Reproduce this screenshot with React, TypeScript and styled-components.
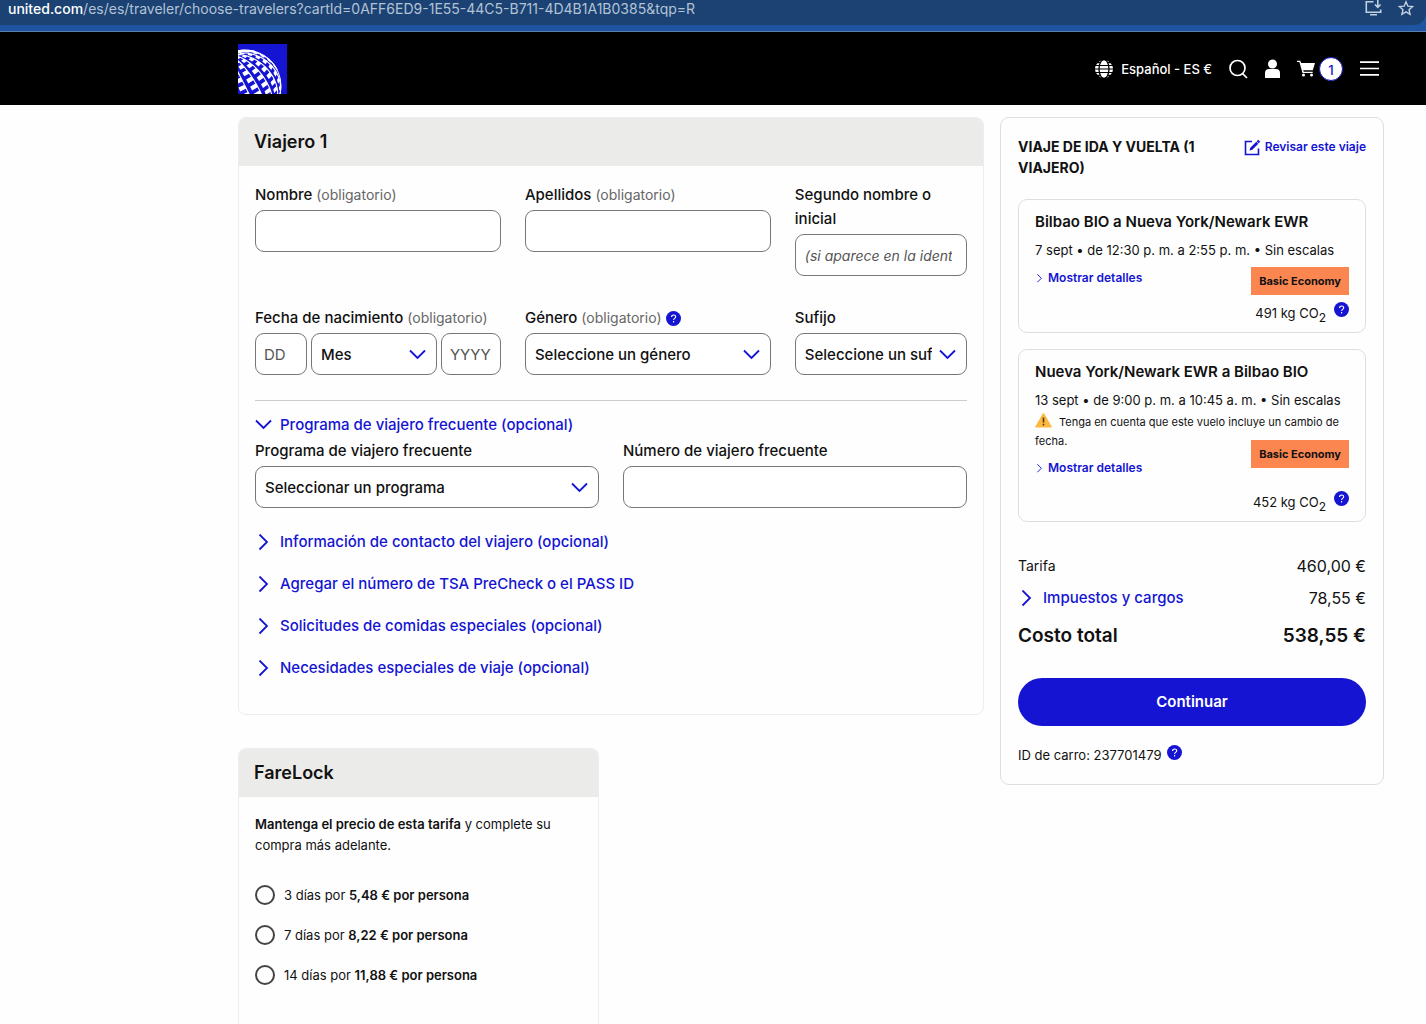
import React from 'react';
import styled, { createGlobalStyle } from 'styled-components';

const blue = '#1414d2';
const ink = '#111';
const line = '#dedede';

const GlobalStyle = createGlobalStyle`
  *, *::before, *::after { box-sizing: border-box; }
  body {
    margin: 0;
    background: #fefefe;
    color: ${ink};
    font-family: Inter, "Liberation Sans", sans-serif;
    font-size: 15px;
    line-height: 24px;
  }
  button, input, select { font: inherit; color: inherit; margin: 0; }
  h1, h2, h3, p { margin: 0; }
  svg { display: block; flex: none; }
`;

const Page = styled.div`
  min-height: 100vh;
  display: flex;
  flex-direction: column;
`;

const BrowserBar = styled.div`
  background: #1e54a0;
  border-bottom: 1px solid #5b7fae;
  padding-bottom: 6px;
`;

const AddressBar = styled.div`
  display: flex;
  align-items: flex-start;
  justify-content: space-between;
  height: 25px;
  padding: 0 12px 0 8px;
  background: #1b4273;
  border-bottom-right-radius: 12px;
  color: #b3c3d6;
  font-size: 14px;
  line-height: 17px;
  white-space: nowrap;
`;

const Domain = styled.span`
  color: #fff;
  font-weight: 500;
`;

const BarIcons = styled.div`
  display: flex;
  gap: 16px;
`;

const Header = styled.header`
  display: flex;
  align-items: center;
  justify-content: space-between;
  height: 73px;
  padding: 0 47px 0 238px;
  background: #000;
  color: #fff;
`;

const Nav = styled.nav`
  display: flex;
  align-items: center;
  gap: 17px;
`;

const NavButton = styled.button`
  display: flex;
  align-items: center;
  gap: 8px;
  padding: 0;
  border: 0;
  background: none;
  color: #fff;
  font-size: 13px;
  font-weight: 500;
  cursor: pointer;
`;

const CartCount = styled.span`
  display: grid;
  place-items: center;
  width: 24px;
  height: 24px;
  margin-left: -4px;
  border: 1px solid ${blue};
  border-radius: 50%;
  background: #fff;
  color: ${blue};
`;

const Content = styled.main`
  flex: 1;
  display: grid;
  grid-template-columns: minmax(0, 1fr) 384px;
  gap: 16px;
  padding: 12px 42px 0 238px;
`;

const Column = styled.div`
  display: flex;
  flex-direction: column;
  gap: 33px;
`;

const Panel = styled.section<{ $half?: boolean }>`
  border: 1px solid #ededed;
  border-radius: 8px;
  overflow: hidden;
  ${p => p.$half && `
    flex: 1;
    width: calc(50% - 12px);
    border-bottom: 0;
    border-bottom-left-radius: 0;
    border-bottom-right-radius: 0;
  `}
`;

const PanelTitle = styled.h2`
  padding: 10px 15px;
  background: #ebebea;
  font-size: 18px;
  font-weight: 600;
  line-height: 28px;
`;

const PanelBody = styled.div`
  padding: 17px 16px 25px;
`;

const NameGrid = styled.div`
  display: grid;
  grid-template-columns: 10fr 10fr 7fr;
  gap: 30px 24px;
  padding-bottom: 25px;
  border-bottom: 1px solid #ccc;
`;

const ProgramGrid = styled.div`
  display: grid;
  grid-template-columns: 1fr 1fr;
  gap: 24px;
  margin: 2px 0 13px;
`;

const Field = styled.div`
  display: flex;
  flex-direction: column;
  gap: 3px;
  min-width: 0;
`;

const LabelRow = styled.div`
  display: flex;
  align-items: center;
  gap: 4px;
`;

const Label = styled.label`
  font-weight: 500;
`;

const Required = styled.span`
  color: #666;
  font-size: 14px;
  font-weight: 400;
`;

const Input = styled.input<{ $width?: number }>`
  width: ${p => (p.$width ? `${p.$width}px` : '100%')};
  height: 42px;
  padding: 0 ${p => (p.$width ? 8 : 14)}px 0 ${p => (p.$width ? 8 : 9)}px;
  border: 1px solid #777;
  border-radius: 9px;
  background: #fff;
  &::placeholder {
    color: #555;
    opacity: 1;
    ${p => !p.$width && 'font-style: italic; font-size: 14px;'}
  }
`;

const SelectBox = styled.div`
  position: relative;
  flex: 1;
  min-width: 0;
  svg {
    position: absolute;
    right: 11px;
    top: 16px;
    color: ${blue};
    pointer-events: none;
  }
`;

const Select = styled.select`
  display: block;
  appearance: none;
  width: 100%;
  height: 42px;
  padding: 2px 34px 0 9px;
  border: 1px solid #777;
  border-radius: 9px;
  background: #fff;
  font-weight: 500;
  overflow: hidden;
  text-overflow: clip;
`;

const DateRow = styled.div`
  display: flex;
  gap: 4px;
`;

const Toggle = styled.button<{ $tall?: boolean }>`
  display: flex;
  align-items: center;
  gap: 8px;
  width: 100%;
  height: ${p => (p.$tall ? 42 : 24)}px;
  padding: 0;
  border: 0;
  background: none;
  color: ${blue};
  font-size: 15px;
  font-weight: 500;
  text-align: left;
  cursor: pointer;
`;

const OpenSection = styled.div`
  padding-top: 12px;
`;

const HelpButton = styled.button`
  display: block;
  padding: 0;
  border: 0;
  background: none;
  cursor: pointer;
`;

const LockText = styled.p`
  margin-bottom: 19px;
  font-size: 13px;
  line-height: 21px;
  strong { font-weight: 600; }
`;

const RadioRow = styled.label`
  display: flex;
  align-items: center;
  gap: 9px;
  height: 40px;
  font-size: 13px;
  strong { font-weight: 600; }
`;

const Radio = styled.input`
  appearance: none;
  width: 20px;
  height: 20px;
  border: 2px solid #444;
  border-radius: 50%;
  background: #fff;
  &:checked { border: 6px solid ${blue}; }
`;

const Summary = styled.aside`
  align-self: start;
  padding: 18px 17px;
  border: 1px solid ${line};
  border-radius: 9px;
`;

const SummaryHead = styled.div`
  display: flex;
  align-items: flex-start;
  justify-content: space-between;
  gap: 16px;
  margin-bottom: 21px;
`;

const SummaryTitle = styled.h2`
  font-size: 14px;
  font-weight: 700;
  line-height: 21px;
`;

const SmallLink = styled.a`
  display: flex;
  align-items: center;
  gap: 4px;
  color: ${blue};
  font-size: 12px;
  font-weight: 600;
  line-height: 22px;
  text-decoration: none;
  white-space: nowrap;
`;

const Flight = styled.article`
  margin-bottom: 16px;
  padding: 11px 16px 8px;
  border: 1px solid ${line};
  border-radius: 9px;
`;

const FlightTitle = styled.h3`
  margin-bottom: 6px;
  font-size: 15px;
  font-weight: 600;
  line-height: 22px;
`;

const FlightTime = styled.p`
  font-size: 13px;
  line-height: 22px;
`;

const Notice = styled.p`
  margin-top: 2px;
  font-size: 11px;
  line-height: 19px;
  svg { display: inline-block; margin-right: 7px; vertical-align: -2px; }
`;

const FlightFoot = styled.div`
  display: flex;
  align-items: flex-start;
  justify-content: space-between;
  margin-top: 6px;
`;

const Fare = styled.div<{ $spread?: boolean }>`
  display: flex;
  flex-direction: column;
  align-items: flex-end;
  gap: ${p => (p.$spread ? 23 : 7)}px;
  margin-top: ${p => (p.$spread ? -17 : 0)}px;
`;

const FareBadge = styled.span`
  padding: 4px 8px;
  background: #fb8650;
  font-size: 11px;
  font-weight: 700;
  line-height: 20px;
`;

const Carbon = styled.div`
  display: flex;
  align-items: flex-start;
  gap: 8px;
  font-size: 13px;
  line-height: 22px;
  sub { font-size: 12px; line-height: 0; }
`;

const Prices = styled.dl`
  display: flex;
  flex-direction: column;
  gap: 8px;
  margin: 32px 0 28px;
`;

const PriceRow = styled.div<{ $total?: boolean }>`
  display: flex;
  justify-content: space-between;
  font-size: 16px;
  ${p => p.$total && 'margin-top: 4px; font-size: 19px; font-weight: 600; line-height: 28px;'}
  dt { font-size: ${p => (p.$total ? 19 : 14)}px; }
  dd, dt { margin: 0; }
`;

const Continue = styled.button`
  width: 100%;
  height: 48px;
  border: 0;
  border-radius: 24px;
  background: ${blue};
  color: #fff;
  font-weight: 600;
  cursor: pointer;
`;

const CartId = styled.div`
  display: flex;
  align-items: flex-start;
  gap: 6px;
  margin-top: 19px;
  font-size: 13px;
  line-height: 21px;
`;

function Chevron({ down, small }: { down?: boolean; small?: boolean }) {
  const size = small ? 9 : 17;
  return (
    <svg width={size} height={down ? 12 : size} viewBox={down ? '0 0 17 12' : '0 0 17 17'} fill="none" stroke="currentColor" strokeWidth="1.800">
      <path d={down ? 'M1 1.500l7.500 7.500L16 1.500' : 'M4.500 .5L12 8 4.500 15.500'} />
    </svg>
  );
}

function Help({ label }: { label: string }) {
  return (
    <HelpButton type="button" aria-label={label}>
      <svg width="15" height="15" viewBox="0 0 15 15" fill="none">
        <circle cx="7.5" cy="7.5" r="7.500" fill={blue} />
        <path d="M5.500 6c0-2.700 4.200-2.700 4.200-.2 0 1.600-2.100 1.500-2.100 3.100M7.600 10v1.400" stroke="#fff" strokeWidth="1.100" />
      </svg>
    </HelpButton>
  );
}

/* Globe mark: the visible side of a tilted sphere, with a block on every other step of each band. */
const globe = (() => {
  const norm = (v: number[]) => {
    const l = Math.hypot(...v);
    return v.map(n => n / l);
  };
  const cross = (a: number[], b: number[]) => [
    a[1] * b[2] - a[2] * b[1],
    a[2] * b[0] - a[0] * b[2],
    a[0] * b[1] - a[1] * b[0],
  ];
  const pole = norm([-0.42, -0.84, 0.3]);
  const east = norm(cross(pole, [0, 0, 1]));
  const south = cross(pole, east);
  const at = (lat: number, lon: number) => {
    const a = (lat * Math.PI) / 180;
    const b = (lon * Math.PI) / 180;
    const p = [0, 1, 2].map(i => Math.cos(a) * pole[i] + Math.sin(a) * (Math.cos(b) * east[i] + Math.sin(b) * south[i]));
    return { x: 7 + 36 * p[0], y: 42 + 36 * p[1], front: p[2] > -0.02 };
  };
  const path = (pts: { x: number; y: number; front: boolean }[], close: boolean) => {
    const seen = pts.filter(p => p.front);
    if (seen.length < 2 || (close && seen.length < pts.length)) return '';
    return 'M' + seen.map(p => `${p.x.toFixed(1)} ${p.y.toFixed(1)}`).join('L') + (close ? 'Z' : '');
  };
  let cells = '';
  let lines = '';
  for (let band = 0; band < 20; band += 1) {
    const lon = band * 18;
    const pts = [];
    for (let lat = 6; lat < 150; lat += 4) pts.push(at(lat, lon));
    lines += path(pts, false);
    for (let lat = 12 + (band % 2) * 6; lat < 130; lat += 13) {
      cells += path([at(lat, lon), at(lat, lon + 11), at(lat + 7, lon + 11), at(lat + 7, lon)], true);
    }
  }
  return { cells, lines };
})();

function Logo() {
  return (
    <svg width="49" height="50" viewBox="0 0 49 50" role="img" aria-label="United">
      <rect width="49" height="50" fill={blue} />
      <path d={globe.cells} fill="#fff" />
      <path d={globe.lines} fill="none" stroke="#fff" strokeWidth="1.100" />
      <circle cx="7" cy="42" r="36" fill="none" stroke="#fff" strokeWidth="1" />
    </svg>
  );
}

function EditIcon() {
  return (
    <svg width="17" height="17" viewBox="0 0 17 17" fill="none" stroke={blue} strokeWidth="1.600">
      <path d="M8 2.500H1.500v13h13V9.500" />
      <path d="M5.500 11.500l.8-2.800 6-6 2 2-6 6z" fill={blue} stroke="none" />
      <path d="M13.700 3.300l1.500-1.500" strokeWidth="2.800" />
    </svg>
  );
}

function Warning() {
  return (
    <svg width="17" height="15" viewBox="0 0 17 15" role="img" aria-label="Aviso">
      <path d="M8.500 1L16 13.800H1z" fill="#fdb93f" stroke="#fdb93f" strokeWidth="1.600" strokeLinejoin="round" />
      <path d="M8.500 4.500v5M8.500 10.800v1.700" stroke="#4a3a1a" strokeWidth="1.600" />
    </svg>
  );
}

const sections = [
  'Información de contacto del viajero (opcional)',
  'Agregar el número de TSA PreCheck o el PASS ID',
  'Solicitudes de comidas especiales (opcional)',
  'Necesidades especiales de viaje (opcional)',
];

const lockOptions = [
  { days: '3 días', price: '5,48 €' },
  { days: '7 días', price: '8,22 €' },
  { days: '14 días', price: '11,88 €' },
];

const flights = [
  { route: 'Bilbao BIO a Nueva York/Newark EWR', time: '7 sept • de 12:30 p. m. a 2:55 p. m. • Sin escalas', carbon: '491 kg CO', notice: '' },
  {
    route: 'Nueva York/Newark EWR a Bilbao BIO',
    time: '13 sept • de 9:00 p. m. a 10:45 a. m. • Sin escalas',
    carbon: '452 kg CO',
    notice: 'Tenga en cuenta que este vuelo incluye un cambio de fecha.',
  },
];

function Dropdown({ id, value, label }: { id: string; value: string; label?: string }) {
  return (
    <SelectBox>
      <Select id={id} aria-label={label}>
        <option>{value}</option>
      </Select>
      <Chevron down />
    </SelectBox>
  );
}

export default function App() {
  return (
    <Page>
      <GlobalStyle />
      <BrowserBar>
        <AddressBar>
          <span>
            <Domain>united.com</Domain>/es/es/traveler/choose-travelers?cartId=0AFF6ED9-1E55-44C5-B711-4D4B1A1B0385&amp;tqp=R
          </span>
          <BarIcons>
            <svg width="17" height="17" viewBox="0 0 17 17" fill="none" stroke="#c3d0e0" strokeWidth="1.600">
              <path d="M8.500 1.800H1.300v10.400h14.400V9.500M5 14.700h7M12.800 0v7M10 4.500l2.800 2.800 2.800-2.800" />
            </svg>
            <svg width="16" height="17" viewBox="0 0 16 17" fill="none" stroke="#c3d0e0" strokeWidth="1.400">
              <path d="M8 1.800l1.900 4.400 4.700.4-3.600 3.100 1.100 4.700L8 11.900l-4.100 2.500L5 9.700 1.400 6.600l4.700-.4z" />
            </svg>
          </BarIcons>
        </AddressBar>
      </BrowserBar>

      <Header>
        <Logo />
        <Nav>
          <NavButton type="button">
            <svg width="18" height="20" viewBox="0 0 18 20" fill="none">
              <circle cx="9" cy="10" r="9" fill="#fff" />
              <path d="M0 6.500h18M0 10h18M0 13.500h18" stroke="#000" strokeWidth="1.100" />
              <path d="M2 3.700h3.500M12.500 3.700H16M2 16.300h3.500M12.500 16.300H16" stroke="#000" strokeWidth="1.300" />
              <ellipse cx="9" cy="10" rx="5" ry="9.500" stroke="#000" strokeWidth="1.300" />
            </svg>
            Español - ES €
          </NavButton>
          <NavButton type="button" aria-label="Buscar">
            <svg width="19" height="20" viewBox="0 0 19 20" fill="none" stroke="#fff" strokeWidth="1.700">
              <circle cx="8.500" cy="9" r="7.500" />
              <path d="M13.500 14.500l4.500 4.500" />
            </svg>
          </NavButton>
          <NavButton type="button" aria-label="Cuenta">
            <svg width="15" height="20" viewBox="0 0 15 20" fill="#fff">
              <circle cx="7.500" cy="5" r="4.500" />
              <path d="M0 19v-5c0-2.400 1.500-4 4-4h7c2.500 0 4 1.600 4 4v5z" />
            </svg>
          </NavButton>
          <NavButton type="button" aria-label="Carrito, 1 artículo">
            <svg width="18" height="17" viewBox="0 0 18 17" fill="#fff">
              <path d="M0 .7h3.300l.8 2.200H18l-2.200 7.400H6.300l.4 1.500h9v1.300H5.500L2.400 2.100H0z" />
              <circle cx="6.500" cy="15.100" r="1.500" />
              <circle cx="14.500" cy="15.100" r="1.500" />
            </svg>
            <CartCount>1</CartCount>
          </NavButton>
          <NavButton type="button" aria-label="Menú">
            <svg width="19" height="15" viewBox="0 0 19 15" stroke="#fff" strokeWidth="1.700">
              <path d="M0 1.200h19M0 7.500h19M0 13.800h19" />
            </svg>
          </NavButton>
        </Nav>
      </Header>

      <Content>
        <Column>
          <Panel>
            <PanelTitle>Viajero 1</PanelTitle>
            <PanelBody>
              <NameGrid>
                <Field>
                  <Label htmlFor="first">Nombre <Required>(obligatorio)</Required></Label>
                  <Input id="first" />
                </Field>
                <Field>
                  <Label htmlFor="last">Apellidos <Required>(obligatorio)</Required></Label>
                  <Input id="last" />
                </Field>
                <Field>
                  <Label htmlFor="middle">Segundo nombre o inicial</Label>
                  <Input id="middle" placeholder="(si aparece en la identificación)" />
                </Field>
                <Field>
                  <Label htmlFor="day">Fecha de nacimiento <Required>(obligatorio)</Required></Label>
                  <DateRow>
                    <Input id="day" $width={52} placeholder="DD" />
                    <Dropdown id="month" value="Mes" label="Mes" />
                    <Input $width={60} placeholder="YYYY" aria-label="Año" />
                  </DateRow>
                </Field>
                <Field>
                  <LabelRow>
                    <Label htmlFor="gender">Género <Required>(obligatorio)</Required></Label>
                    <Help label="Ayuda sobre el género" />
                  </LabelRow>
                  <Dropdown id="gender" value="Seleccione un género" />
                </Field>
                <Field>
                  <Label htmlFor="suffix">Sufijo</Label>
                  <Dropdown id="suffix" value="Seleccione un sufijo" />
                </Field>
              </NameGrid>

              <OpenSection>
                <Toggle type="button" aria-expanded="true">
                  <Chevron down />
                  Programa de viajero frecuente (opcional)
                </Toggle>
                <ProgramGrid>
                  <Field>
                    <Label htmlFor="program">Programa de viajero frecuente</Label>
                    <Dropdown id="program" value="Seleccionar un programa" />
                  </Field>
                  <Field>
                    <Label htmlFor="number">Número de viajero frecuente</Label>
                    <Input id="number" />
                  </Field>
                </ProgramGrid>
              </OpenSection>
              {sections.map(title => (
                <Toggle key={title} type="button" aria-expanded="false" $tall>
                  <Chevron />
                  {title}
                </Toggle>
              ))}
            </PanelBody>
          </Panel>

          <Panel $half>
            <PanelTitle>FareLock</PanelTitle>
            <PanelBody>
              <LockText>
                <strong>Mantenga el precio de esta tarifa</strong> y complete su compra más adelante.
              </LockText>
              {lockOptions.map(option => (
                <RadioRow key={option.days}>
                  <Radio type="radio" name="farelock" />
                  <span>{option.days} por <strong>{option.price} por persona</strong></span>
                </RadioRow>
              ))}
            </PanelBody>
          </Panel>
        </Column>

        <Summary>
          <SummaryHead>
            <SummaryTitle>VIAJE DE IDA Y VUELTA (1 VIAJERO)</SummaryTitle>
            <SmallLink href="#viaje"><EditIcon />Revisar este viaje</SmallLink>
          </SummaryHead>
          {flights.map(flight => (
            <Flight key={flight.route}>
              <FlightTitle>{flight.route}</FlightTitle>
              <FlightTime>{flight.time}</FlightTime>
              {flight.notice && <Notice><Warning />{flight.notice}</Notice>}
              <FlightFoot>
                <SmallLink href="#detalles"><Chevron small />Mostrar detalles</SmallLink>
                <Fare $spread={!!flight.notice}>
                  <FareBadge>Basic Economy</FareBadge>
                  <Carbon>
                    <span>{flight.carbon}<sub>2</sub></span>
                    <Help label="Ayuda sobre emisiones" />
                  </Carbon>
                </Fare>
              </FlightFoot>
            </Flight>
          ))}
          <Prices>
            <PriceRow><dt>Tarifa</dt><dd>460,00 €</dd></PriceRow>
            <PriceRow>
              <dt><Toggle type="button" aria-expanded="false"><Chevron />Impuestos y cargos</Toggle></dt>
              <dd>78,55 €</dd>
            </PriceRow>
            <PriceRow $total><dt>Costo total</dt><dd>538,55 €</dd></PriceRow>
          </Prices>
          <Continue type="button">Continuar</Continue>
          <CartId>ID de carro: 237701479 <Help label="Ayuda sobre el ID de carro" /></CartId>
        </Summary>
      </Content>
    </Page>
  );
}
